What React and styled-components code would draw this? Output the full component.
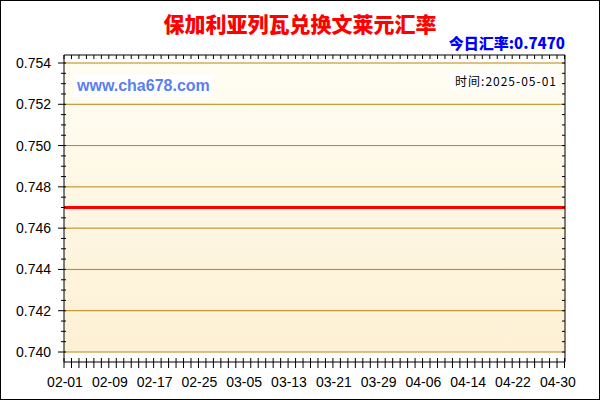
import React from "react";
import styled, { createGlobalStyle } from "styled-components";

const G = createGlobalStyle`
  html,body{margin:0;padding:0;background:#fff;}
`;
const Frame = styled.div`
  position: relative;
  width: 600px; height: 400px; box-sizing: border-box;
  border: 1px solid #000; background: #fff; overflow: hidden;
  font-family: "Liberation Sans", Arial, sans-serif;
`;
const Title = styled.div`
  position: absolute; left: 0; right: 0; top: 8px; text-align: center;
  color: #f00; font-weight: 900; font-size: 21px;
  font-family: "Noto Sans CJK SC", sans-serif; line-height: 28px;
`;
const Rate = styled.div`
  position: absolute; right: 34px; top: 32px;
  color: #00f; font-weight: 900; font-size: 15px;
  font-family: "Noto Sans CJK SC", sans-serif; line-height: 20px;
`;

const L = 64, R = 565, T = 63, B = 352;
const yv = v => T + (0.754 - v) / 0.014 * (B - T);
const labels = ["02-01","02-09","02-17","02-25","03-05","03-13","03-21","03-29","04-06","04-14","04-22","04-30"];
const xs = i => 65 + i * 44.8;

export default function App() {
  const grid = [0.754,0.752,0.75,0.748,0.746,0.744,0.742,0.74];
  const minorY = [];
  for (let v = 0; v <= 28; v++) minorY.push(T + v * (B - T) / 28);
  const minorX = [];
  for (let x = L; x <= R; x += 7.47) minorX.push(x);
  return (
    <Frame>
      <G />
      <Title>保加利亚列瓦兑换文莱元汇率</Title>
      <Rate>今日汇率:0.7470</Rate>
      <svg width="600" height="400" style={{position:"absolute",left:-1,top:-1}}>
        <defs>
          <linearGradient id="bg" x1="0" y1="0" x2="0" y2="1">
            <stop offset="0" stopColor="#fffdf3"/>
            <stop offset="1" stopColor="#fdf0d4"/>
          </linearGradient>
        </defs>
        <rect x={L} y={T} width={R-L} height={B-T} fill="url(#bg)"/>
        {grid.map(v => <line key={v} x1={L} x2={R} y1={yv(v)} y2={yv(v)} stroke="#b8860b" strokeWidth="1"/>)}
        <line x1={L} x2={R} y1={yv(0.747)} y2={yv(0.747)} stroke="#f00" strokeWidth="3"/>
        <line x1={L} x2={L} y1={T-8} y2={B+10} stroke="#000"/>
        <line x1={R} x2={R} y1={T-8} y2={B+10} stroke="#000"/>
        <line x1={L} x2={R} y1={T-8} y2={T-8} stroke="#000"/>
        <line x1={L} x2={R} y1={B+10} y2={B+10} stroke="#000"/>
        {minorY.map((y,i)=><g key={i}>
          <line x1={i%4===0?L-6:L-3} x2={L+2} y1={y} y2={y} stroke="#000"/>
          <line x1={R-3} x2={R} y1={y} y2={y} stroke="#000"/>
        </g>)}
        {minorX.map((x,i)=><g key={i}>
          <line x1={x} x2={x} y1={T-8} y2={T-4} stroke="#000"/>
          <line x1={x} x2={x} y1={B+6} y2={B+16} stroke="#000" />
        </g>)}
        <g fontFamily="Liberation Sans, Arial, sans-serif" fontSize="14" fill="#000">
          {grid.map(v => <text key={v} x={51} y={yv(v)+5} textAnchor="end">{v.toFixed(3)}</text>)}
          {labels.map((l,i)=><text key={l} x={xs(i)} y={387} textAnchor="middle">{l}</text>)}
        </g>
        <rect x={74} y={75} width={140} height={22} fill="#fff"/>
        <text x={77} y={91} fontFamily="Liberation Sans, Arial, sans-serif" fontSize="16" fontWeight="bold" fill="#5a7ff0">www.cha678.com</text>
        <rect x={450} y={72} width={108} height={18} fill="#fff"/>
        <text x={557} y={86} textAnchor="end" letterSpacing="1" fontFamily="Noto Sans CJK SC, sans-serif" fontSize="12" fill="#000">时间:2025-05-01</text>
      </svg>
    </Frame>
  );
}
